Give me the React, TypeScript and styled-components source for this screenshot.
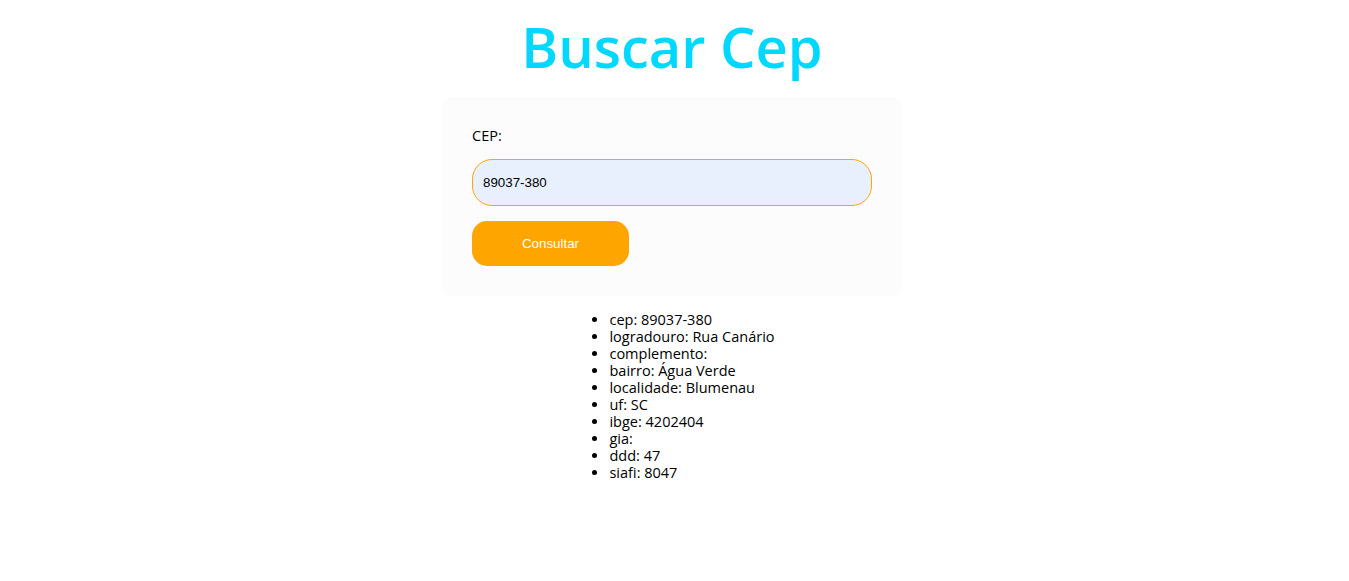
import React, { useState } from "react";
import styled, { createGlobalStyle } from "styled-components";

const GlobalStyle = createGlobalStyle`
  body {
    margin: 0;
    background: #ffffff;
    font-family: "Open Sans", "Noto Sans", sans-serif;
    color: #000000;
  }
`;

const Page = styled.div`
  display: flex;
  flex-direction: column;
  align-items: center;
  padding-right: 5px;
`;

const Title = styled.h1`
  margin: 6px 0 0;
  font-size: 56px;
  line-height: 80px;
  font-weight: 600;
  color: #00d8ff;
`;

const Panel = styled.form`
  margin-top: 11px;
  width: 460px;
  box-sizing: border-box;
  padding: 30px;
  background-color: #fcfcfc;
  border-radius: 10px;
  display: flex;
  flex-direction: column;
  gap: 15px;
`;

const Label = styled.label`
  font-size: 14.5px;
  line-height: 17px;
`;

const Input = styled.input`
  box-sizing: border-box;
  width: 400px;
  height: 47px;
  padding: 0 10px;
  border: 1px solid #ffa500;
  border-radius: 20px;
  background-color: #e8f0fe;
  font-family: "Liberation Sans", Arial, sans-serif;
  font-size: 13.33px;
  color: #000000;
  &:focus {
    outline: none;
  }
`;

const Button = styled.button`
  width: 157px;
  height: 45px;
  border: none;
  border-radius: 15px;
  background-color: #ffa500;
  color: #ffffff;
  font-family: "Liberation Sans", Arial, sans-serif;
  font-size: 13.33px;
  cursor: pointer;
`;

const List = styled.ul`
  margin: 15px 0 0;
  padding-left: 40px;
  font-size: 14.5px;
  line-height: 17px;
`;

interface Endereco {
  cep: string;
  logradouro: string;
  complemento: string;
  bairro: string;
  localidade: string;
  uf: string;
  ibge: string;
  gia: string;
  ddd: string;
  siafi: string;
}

const resultado: Endereco = {
  cep: "89037-380",
  logradouro: "Rua Canário",
  complemento: "",
  bairro: "Água Verde",
  localidade: "Blumenau",
  uf: "SC",
  ibge: "4202404",
  gia: "",
  ddd: "47",
  siafi: "8047",
};

export default function App() {
  const [cep, setCep] = useState("89037-380");

  const onSubmit = (e: React.FormEvent<HTMLFormElement>) => {
    e.preventDefault();
  };

  return (
    <>
      <GlobalStyle />
      <Page>
        <Title>Buscar Cep</Title>
        <Panel onSubmit={onSubmit}>
          <Label htmlFor="cep">CEP:</Label>
          <Input
            id="cep"
            value={cep}
            onChange={(e) => setCep(e.target.value)}
          />
          <Button type="submit">Consultar</Button>
        </Panel>
        <List>
          {Object.entries(resultado).map(([key, value]) => (
            <li key={key}>
              {key}: {value}
            </li>
          ))}
        </List>
      </Page>
    </>
  );
}
